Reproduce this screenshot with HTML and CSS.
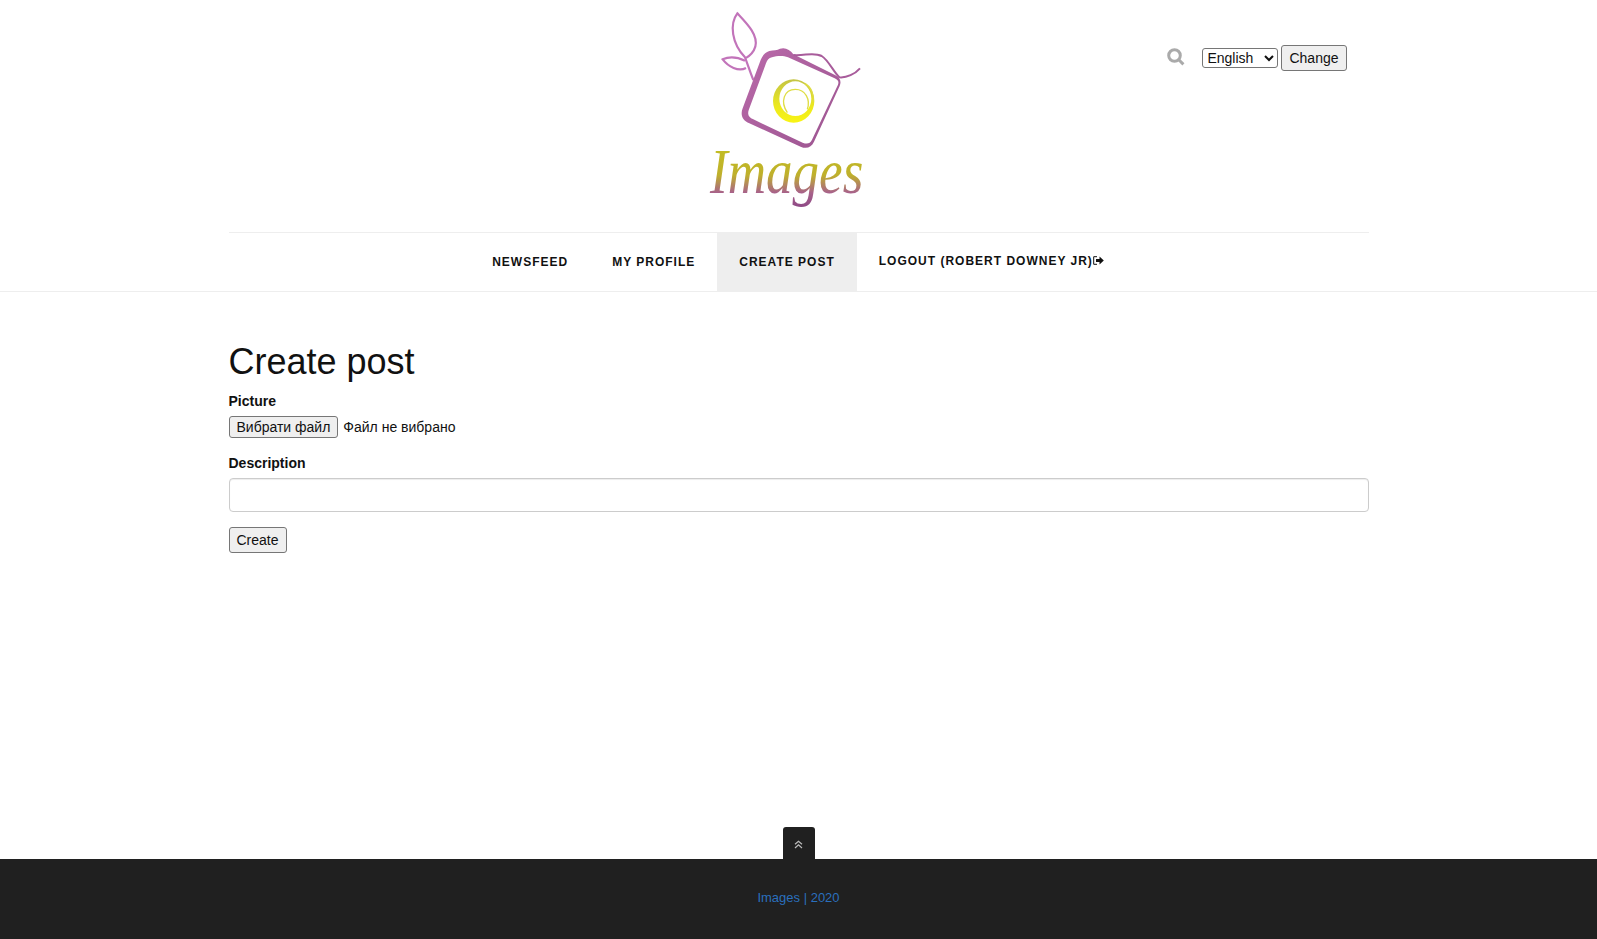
FILE: index.html
```html
<!DOCTYPE html>
<html>
<head>
<meta charset="UTF-8">
<title>Create post</title>
<link rel="stylesheet" href="styles.css">
</head>
<body>
	<div class="container">
		<header class="top">
			<div></div>
			<a href="#" class="logo">
				<svg width="218" height="232" viewBox="0 0 654 696">
					<defs>
						<linearGradient id="frameGrad" x1="0" y1="0" x2="1" y2="1">
							<stop offset="0" stop-color="#ba6aaa"/>
							<stop offset="1" stop-color="#9c5590"/>
						</linearGradient>
						<linearGradient id="ringGrad" x1="0" y1="0" x2="0" y2="1">
							<stop offset="0" stop-color="#c4c445"/>
							<stop offset="0.6" stop-color="#ebe81f"/>
							<stop offset="1" stop-color="#f9f414"/>
						</linearGradient>
						<linearGradient id="wordGrad" x1="0" y1="0" x2="0" y2="1">
							<stop offset="0" stop-color="#c4c31e"/>
							<stop offset="0.55" stop-color="#bfb02c"/>
							<stop offset="0.8" stop-color="#a8628a"/>
							<stop offset="1" stop-color="#8f4a86"/>
						</linearGradient>
					</defs>
					<path class="leaf" d="M190 240 C178 210 172 190 165 172 C125 130 118 72 142 40 C172 72 205 105 196 140 C190 160 176 170 165 176"/>
					<path class="leaf" d="M165 182 C140 170 115 170 98 178 C115 200 145 216 168 204"/>
					<path class="frame" fill-rule="evenodd" d="M238 153 C250 150 262 152 270 146 C285 141 300 148 310 163 L435 225 C450 232 455 244 449 258 L372 425 C364 442 350 448 332 440 L178 370 C158 362 150 345 158 325 L212 180 C218 165 226 157 238 153 Z M246 172 C236 174 232 180 228 190 L177 328 C171 344 176 352 190 358 L338 428 C352 433 360 431 366 419 L444 254 C447 245 445 240 434 235 L294 172 C278 166 260 168 246 172 Z"/>
					<path class="strap" d="M310 165 C345 168 370 155 395 168 C415 180 430 215 448 232 C470 234 495 222 510 205"/>
					<path class="ring" fill-rule="evenodd" d="M249 303 A62 65 0 1 0 373 303 A62 65 0 1 0 249 303 Z M268 296 A48 52 0 1 1 364 296 A48 52 0 1 1 268 296 Z"/>
					<path class="swirl" d="M292 338 C270 305 282 268 316 268 C346 268 362 298 352 328"/>
					<path class="swirl" d="M345 250 C365 262 372 285 370 305"/>
					<text class="word" x="60" y="578" textLength="460" lengthAdjust="spacingAndGlyphs" fill="url(#wordGrad)">Images</text>
				</svg>
			</a>
			<div class="tools">
				<svg class="search" width="18" height="18" viewBox="0 0 18 18"><circle cx="7.5" cy="7.5" r="5.8"/><path d="M11.8 11.8 L16.4 16.4"/></svg>
				<form class="lang">
					<select>
						<option>English</option>
					</select>
					<button type="button" class="btn">Change</button>
				</form>
			</div>
		</header>
	</div>

	<nav class="mainnav">
		<ul class="container menu">
			<li><a href="#">Newsfeed</a></li>
			<li><a href="#">My profile</a></li>
			<li class="active"><a href="#">Create post</a></li>
			<li class="logout"><a href="#">Logout (Robert Downey Jr)<svg width="11" height="9" viewBox="0 0 11 9"><path class="door" d="M4 .7 H.7 V8.3 H4"/><path class="arrow" d="M3 3 H6.5 V.6 L10.8 4.5 L6.5 8.4 V6 H3 Z"/></svg></a></li>
		</ul>
	</nav>

	<main class="container content">
		<h1>Create post</h1>
		<form>
			<div class="field">
				<label>Picture</label>
				<div class="file"><button type="button" class="btn">Вибрати файл</button><span>Файл не вибрано</span></div>
			</div>
			<div class="field">
				<label>Description</label>
				<input type="text" class="text-input">
			</div>
			<button type="button" class="btn">Create</button>
		</form>
	</main>

	<footer class="footer">
		<a href="#" class="to-top"><svg width="9" height="9" viewBox="0 0 9 9"><path d="M1 4.3 L4.5 1.2 L8 4.3 M1 8 L4.5 4.9 L8 8"/></svg></a>
		<a href="#" class="copy">Images | 2020</a>
	</footer>
</body>
</html>
```

FILE: styles.css
```css
* {
	box-sizing: border-box;
}

html, body {
	height: 100%;
}

body {
	margin: 0;
	display: flex;
	flex-direction: column;
	min-height: 939px;
	font-family: "Liberation Sans", Arial, sans-serif;
	font-size: 14px;
	color: #111;
	background: #fff;
}

.container {
	width: 1140px;
	margin: 0 auto;
}

.top {
	display: grid;
	grid-template-columns: 1fr auto 1fr;
	height: 233px;
	border-bottom: 1px solid #eee;
}

.logo {
	display: block;
	height: 232px;
}

.logo svg {
	display: block;
}

.leaf {
	fill: none;
	stroke: #c274ba;
	stroke-width: 6.5;
}

.frame {
	fill: url(#frameGrad);
}

.strap {
	fill: none;
	stroke: #a85c9b;
	stroke-width: 6;
}

.ring {
	fill: url(#ringGrad);
}

.swirl {
	fill: none;
	stroke: #dfdd45;
	stroke-width: 4;
}

.word {
	font-family: "Liberation Serif", serif;
	font-style: italic;
	font-size: 190px;
}

.tools {
	display: flex;
	justify-content: flex-end;
	align-items: flex-start;
	padding: 45px 22px 0 0;
}

.search {
	margin: 3px 17px 0 0;
}

.search circle, .search path {
	fill: none;
	stroke: #aaa;
	stroke-width: 3;
}

.lang {
	display: flex;
	align-items: center;
	gap: 3px;
}

.lang select {
	width: 76px;
	height: 20px;
	font-family: "Liberation Sans", Arial, sans-serif;
	font-size: 14px;
	color: #111;
	background: #fff;
	border: 1px solid #767676;
	border-radius: 3px;
}

.btn {
	height: 26px;
	padding: 1px 7px;
	font-family: "Liberation Sans", Arial, sans-serif;
	font-size: 14px;
	color: #111;
	background: #efefef;
	border: 1px solid #767676;
	border-radius: 3px;
}

.mainnav {
	border-bottom: 1px solid #eee;
}

.menu {
	display: flex;
	justify-content: center;
	height: 58px;
	padding: 0 1px 0 0;
	margin-top: 0;
	margin-bottom: 0;
	list-style: none;
}

.menu a {
	display: block;
	height: 100%;
	padding: 22px 22px 0;
	font-size: 12px;
	font-weight: bold;
	line-height: 14px;
	letter-spacing: 1px;
	text-transform: uppercase;
	text-decoration: none;
	color: #111;
}

.menu .active a {
	background: #eee;
}

.menu .logout a {
	padding-top: 21px;
}

.door {
	fill: none;
	stroke: #111;
	stroke-width: 1;
}

.arrow {
	fill: #111;
}

.content {
	padding-top: 50px;
}

h1 {
	margin: 0 0 9px;
	font-size: 36px;
	font-weight: normal;
	line-height: 40px;
}

.field {
	margin-bottom: 15px;
}

label {
	display: block;
	margin-bottom: 5px;
	font-weight: bold;
	line-height: 20px;
}

.file {
	display: flex;
	align-items: center;
	height: 22px;
}

.file .btn {
	height: 22px;
	padding: 0 7px;
}

.file span {
	margin-left: 5px;
}

.text-input {
	display: block;
	width: 100%;
	height: 34px;
	background: #fff;
	border: 1px solid #ccc;
	border-radius: 4px;
	box-shadow: inset 0 1px 1px rgba(0, 0, 0, .075);
}

.footer {
	position: relative;
	margin-top: auto;
	height: 80px;
	padding-top: 29px;
	text-align: center;
	background: #202020;
}

.copy {
	font-size: 13px;
	line-height: 20px;
	color: #2a6fbd;
	text-decoration: none;
}

.to-top {
	position: absolute;
	left: 783px;
	top: -32px;
	display: flex;
	justify-content: center;
	padding: 13px 1px 0 0;
	width: 32px;
	height: 32px;
	background: #202020;
	border-radius: 3px 3px 0 0;
}

.to-top path {
	fill: none;
	stroke: #bbb;
	stroke-width: 1.2;
}
```
